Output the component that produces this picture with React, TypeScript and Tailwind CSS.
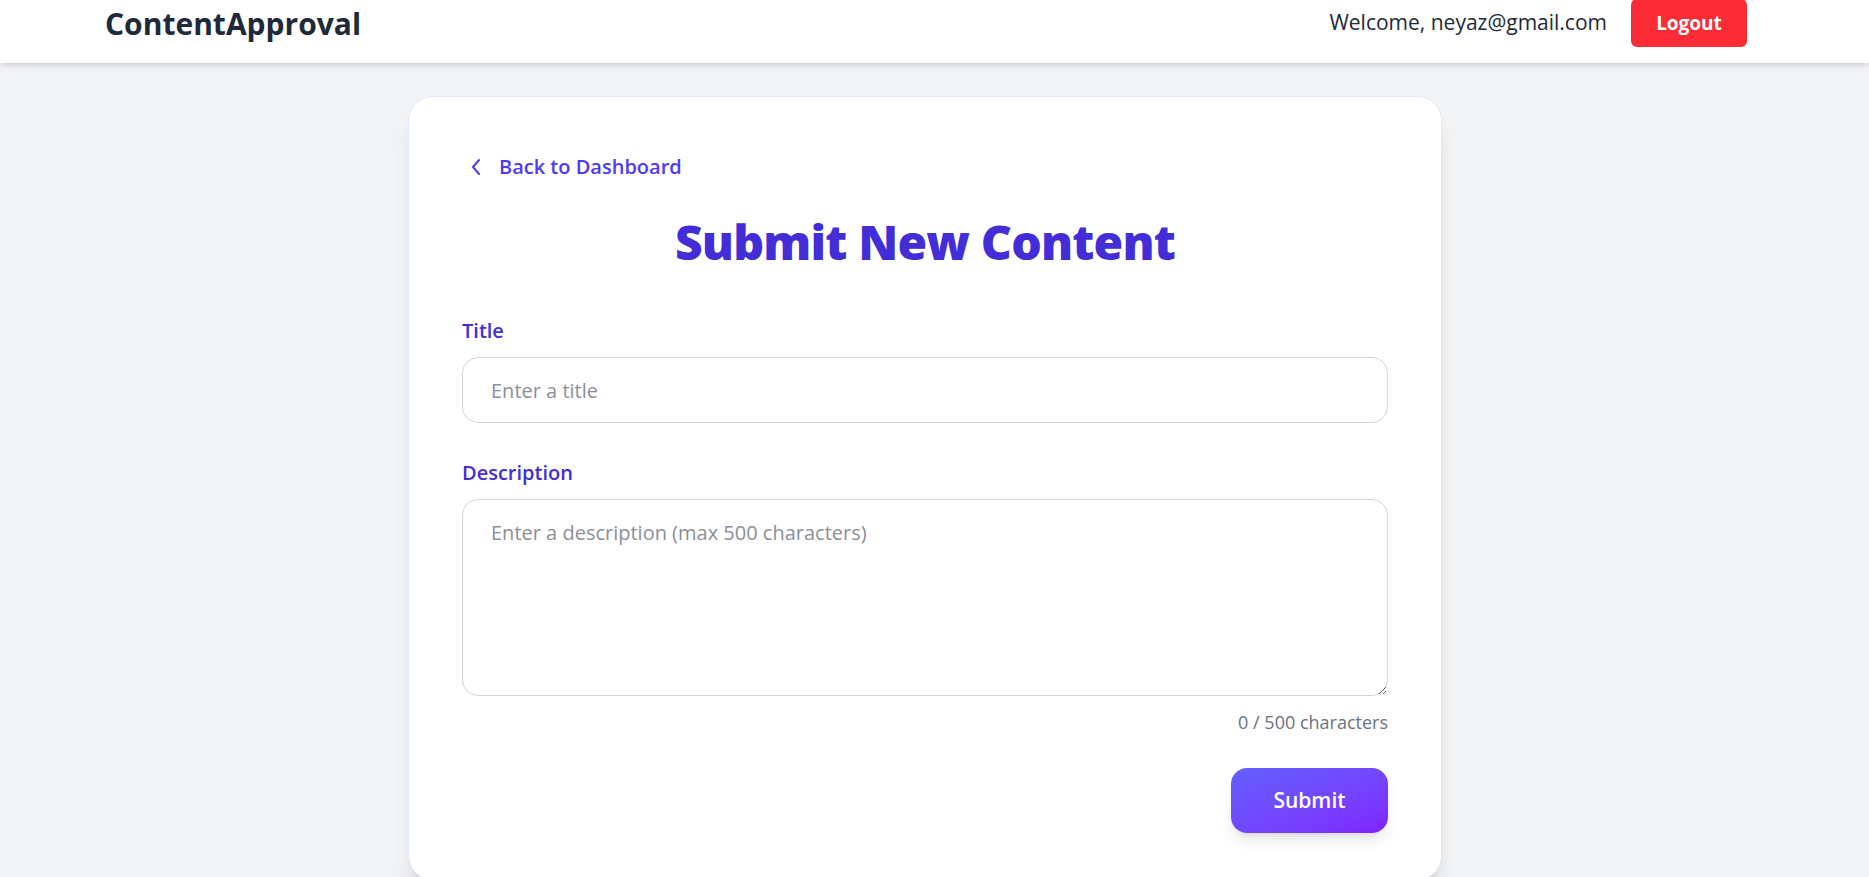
import React, { useState } from "react";

export default function App() {
  const [title, setTitle] = useState("");
  const [desc, setDesc] = useState("");
  return (
    <div className="min-h-screen bg-gray-100 overflow-hidden font-['Open_Sans',sans-serif] text-gray-800">
      <header className="-mt-[17px] bg-white shadow-md">
        <div className="flex items-center justify-between pl-[105px] pr-[122px] py-4">
          <div className="text-[30px] font-bold text-gray-800">ContentApproval</div>
          <div className="flex items-center gap-6">
            <span className="text-[21px] text-gray-800">Welcome, neyaz@gmail.com</span>
            <button className="h-12 w-[116px] rounded-md bg-red-500 text-white text-[19px] font-bold">Logout</button>
          </div>
        </div>
      </header>
      <main className="pt-[33px] pl-[408px]">
        <div className="w-[1034px] bg-white border border-indigo-100 rounded-3xl shadow-xl px-[53px] pt-[56px] pb-[46px]">
          <a href="#" className="flex items-center gap-[17px] text-indigo-600 text-[20px] font-semibold leading-7 w-fit">
            <svg width="12" height="18" viewBox="0 0 12 18" fill="none" stroke="currentColor" strokeWidth="2" strokeLinecap="round" strokeLinejoin="round" className="ml-[8px]">
              <polyline points="9,2 3,9 9,16" />
            </svg>
            <span>Back to Dashboard</span>
          </a>
          <h1 className="mt-[37px] text-center text-[48px] leading-[48px] font-extrabold text-indigo-700 tracking-[-0.8px]">Submit New Content</h1>
          <form className="mt-[51px]" onSubmit={(e) => e.preventDefault()}>
            <label className="block text-[20px] leading-7 font-semibold text-indigo-700 mb-3">Title</label>
            <input
              value={title}
              onChange={(e) => setTitle(e.target.value)}
              placeholder="Enter a title"
              className="block w-full h-[66px] rounded-2xl border border-gray-300 px-[28px] text-[20px] text-gray-800 placeholder:text-[#8b8f99] outline-none"
            />
            <label className="block mt-[36px] text-[20px] leading-7 font-semibold text-indigo-700 mb-3">Description</label>
            <textarea
              value={desc}
              onChange={(e) => setDesc(e.target.value.slice(0, 500))}
              placeholder="Enter a description (max 500 characters)"
              className="block w-full h-[197px] rounded-2xl border border-gray-300 px-[28px] pt-[19px] pb-[14px] text-[20px] leading-7 text-gray-800 placeholder:text-[#8b8f99] outline-none"
            />
            <div className="mt-[14px] text-right text-[18px] leading-6 text-gray-500">{desc.length} / 500 characters</div>
            <div className="mt-[34px] flex justify-end">
              <button className="w-[157px] h-[65px] rounded-2xl bg-gradient-to-br from-indigo-500 to-violet-600 text-white text-[21px] font-semibold shadow-lg">Submit</button>
            </div>
          </form>
        </div>
      </main>
    </div>
  );
}
